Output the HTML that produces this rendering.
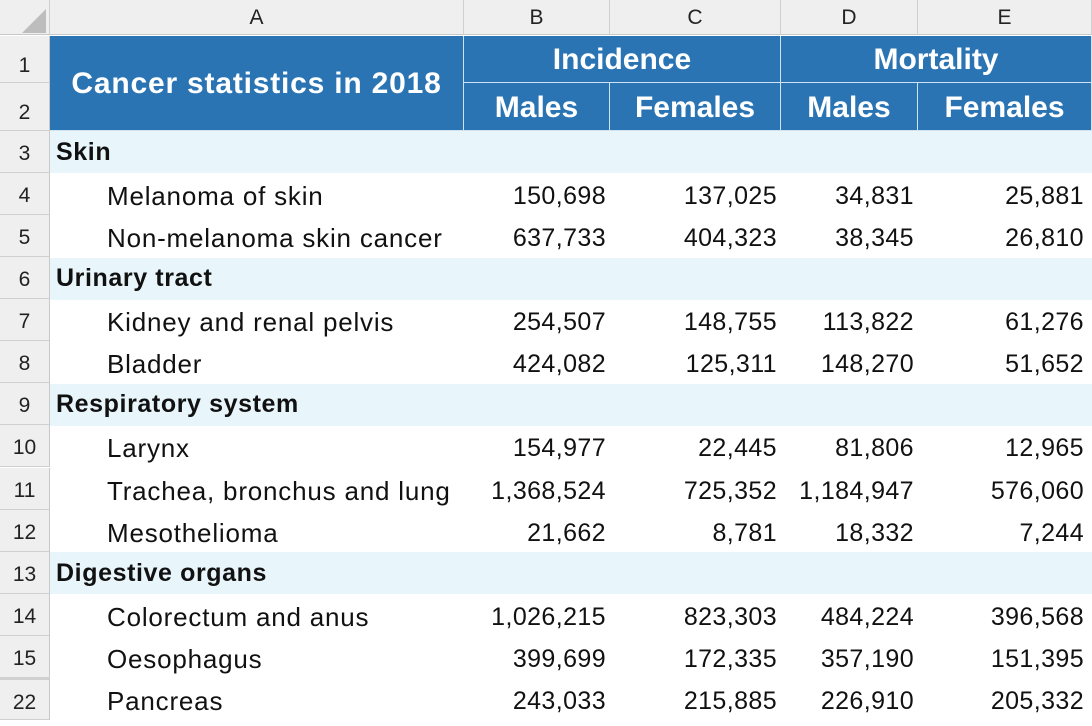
<!DOCTYPE html>
<html><head><meta charset="utf-8"><style>
*{margin:0;padding:0;box-sizing:border-box}
body{width:1092px;height:719px;overflow:hidden;background:#fff;font-family:"Liberation Sans",sans-serif;position:relative}
.a{position:absolute;white-space:nowrap}
.ch{background:#efefef;top:0;height:35px;border-right:1px solid #d0d0d0;border-bottom:1px solid #c8c8c8;text-align:center;font-size:21px;line-height:35px;color:#222}
.rh{background:#efefef;left:0;width:50px;border-bottom:1px solid #d0d0d0;border-right:1px solid #c8c8c8;text-align:center;font-size:21px;color:#222}
.hb{background:#2a74b4;color:#fff;font-weight:bold;text-align:center;border-right:1px solid #cfe3f3;border-bottom:1px solid #cfe3f3}
.band{background:#e8f5fa;left:50px;width:1042px;height:42px}
.t{font-size:25px;color:#111;line-height:42px}
.l{font-size:26px;letter-spacing:0.8px}
.b{font-weight:bold;left:56px;letter-spacing:0.6px}
.n{text-align:right;letter-spacing:0.4px}
</style></head><body>
<div class="a ch" style="left:0;width:50px;background:#efefef"></div>
<svg class="a" style="left:22px;top:9px" width="24" height="24"><polygon points="24,0 24,24 0,24" fill="#bdbdbd"/></svg>
<div class="a ch" style="left:50px;width:414px">A</div>
<div class="a ch" style="left:464px;width:146px">B</div>
<div class="a ch" style="left:610px;width:171px">C</div>
<div class="a ch" style="left:781px;width:137px">D</div>
<div class="a ch" style="left:918px;width:174px">E</div>

<div class="a hb" style="left:50px;top:36px;width:414px;height:95px;font-size:30px;letter-spacing:0.8px;line-height:95px">Cancer statistics in 2018</div>
<div class="a hb" style="left:464px;top:36px;width:317px;height:47px;font-size:30px;line-height:47px">Incidence</div>
<div class="a hb" style="left:781px;top:36px;width:311px;height:47px;font-size:30px;line-height:47px">Mortality</div>
<div class="a hb" style="left:464px;top:83px;width:146px;height:48px;font-size:30px;line-height:50px">Males</div>
<div class="a hb" style="left:610px;top:83px;width:171px;height:48px;font-size:30px;line-height:50px">Females</div>
<div class="a hb" style="left:781px;top:83px;width:137px;height:48px;font-size:30px;line-height:50px">Males</div>
<div class="a hb" style="left:918px;top:83px;width:174px;height:48px;font-size:30px;line-height:50px">Females</div>

<div class="a rh" style="top:36px;height:47px;line-height:60px">1</div>
<div class="a rh" style="top:83px;height:48px;line-height:60px">2</div>

<div class="a band" style="top:131px"></div>
<div class="a band" style="top:258px"></div>
<div class="a band" style="top:384px"></div>
<div class="a band" style="top:552px"></div>

<div id="rows"></div>
<script>
var data=[
["3","Skin",1],
["4","Melanoma of skin",0,"150,698","137,025","34,831","25,881"],
["5","Non-melanoma skin cancer",0,"637,733","404,323","38,345","26,810"],
["6","Urinary tract",1],
["7","Kidney and renal pelvis",0,"254,507","148,755","113,822","61,276"],
["8","Bladder",0,"424,082","125,311","148,270","51,652"],
["9","Respiratory system",1],
["10","Larynx",0,"154,977","22,445","81,806","12,965"],
["11","Trachea, bronchus and lung",0,"1,368,524","725,352","1,184,947","576,060"],
["12","Mesothelioma",0,"21,662","8,781","18,332","7,244"],
["13","Digestive organs",1],
["14","Colorectum and anus",0,"1,026,215","823,303","484,224","396,568"],
["15","Oesophagus",0,"399,699","172,335","357,190","151,395"],
["22","Pancreas",0,"243,033","215,885","226,910","205,332"]];
var h="",rights=[606,777,914,1084];
data.forEach(function(r,i){var top=131+i*42.07;
h+='<div class="a rh" style="top:'+top+'px;height:42px;line-height:46px'+(r[0]=="22"?';border-top:2px solid #d0d0d0':'')+'">'+r[0]+'</div>';
if(r[2])h+='<div class="a t b" style="top:'+top+'px">'+r[1]+'</div>';
else{h+='<div class="a t l" style="left:107px;top:'+(top+2)+'px">'+r[1]+'</div>';
for(var k=0;k<4;k++)h+='<div class="a t n" style="right:'+(1092-rights[k])+'px;top:'+(top+2)+'px">'+r[3+k]+'</div>';}
});
document.getElementById("rows").innerHTML=h;
</script>
</body></html>
